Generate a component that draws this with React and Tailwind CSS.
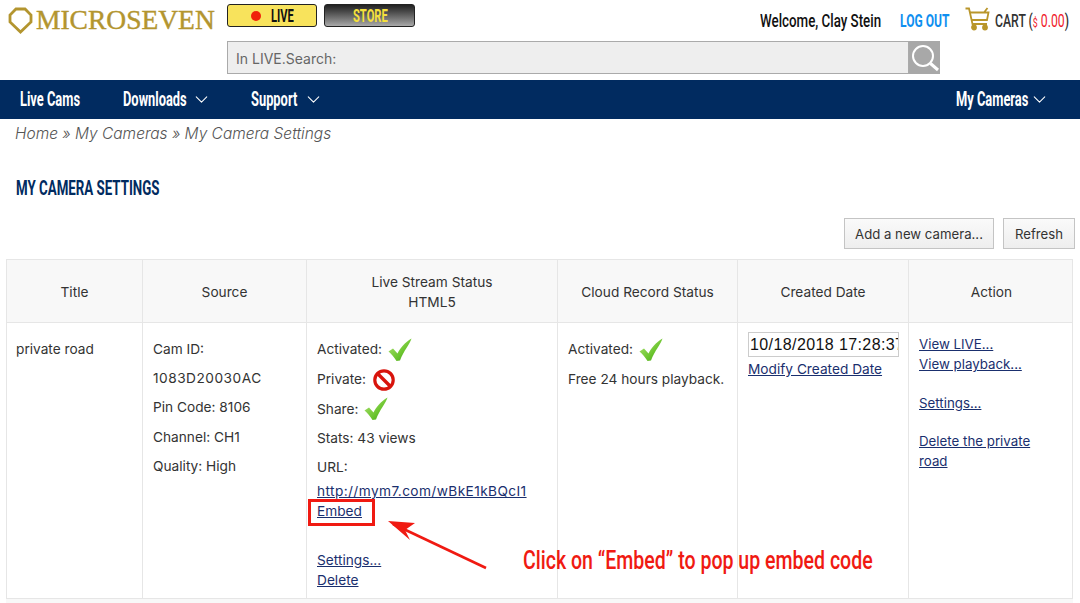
import React from "react";
import { ChevronDown } from "lucide-react";

const Check = () => (
  <svg width="24" height="25" viewBox="0 0 24 25" className="inline-block align-middle ml-[2px]">
    <defs>
      <linearGradient id="chk" x1="0" y1="0" x2="1" y2="1">
        <stop offset="0" stopColor="#b4e57a" />
        <stop offset="0.6" stopColor="#6cc52f" />
        <stop offset="1" stopColor="#3f9a14" />
      </linearGradient>
    </defs>
    <path d="M0.5 13.5 L5 10.5 L9.5 15.5 C12 10 17 4.5 23.5 0.5 C22.5 5 15.5 13 12 22.5 L8.5 23 C6 19 3.5 16 0.5 13.5 Z" fill="url(#chk)" />
  </svg>
);

const NoSign = () => (
  <svg width="24" height="24" viewBox="0 0 24 24" className="inline-block align-middle ml-[2px]">
    <circle cx="12" cy="12" r="9.2" fill="#fff" stroke="#d8140c" strokeWidth="3.2" />
    <path d="M5.5 5.5 L18.5 18.5" stroke="#d8140c" strokeWidth="3.4" />
  </svg>
);

const Cart = () => (
  <svg width="25" height="24" viewBox="0 0 25 24" fill="none" stroke="#b9962b" strokeWidth="1.8">
    <path d="M0.5 1.5 H4 L7.5 17 H22" />
    <path d="M5 5.5 L23.5 5.5 L22 13 H6.5 M19 5.5 L22.5 1" />
    <circle cx="9" cy="20.5" r="2" fill="#b9962b" />
    <circle cx="20" cy="20.5" r="2" fill="#b9962b" />
  </svg>
);

const condensed = "font-['Roboto',sans-serif]";

// no condensed family is installed, so squeeze Roboto to the width in the picture
const Cond = ({ w, x, children, className }) => (
  <span className={`inline-block shrink-0 ${w} ${className || ""}`}>
    <span className={`inline-block origin-left whitespace-nowrap ${x} ${condensed}`}>{children}</span>
  </span>
);

const Chevron = ({ className }) => (
  <ChevronDown size={21} strokeWidth={1.2} className={`text-white ${className || ""}`} />
);

const Link = ({ children, className }) => <a className={`text-[#1a2f6e] underline ${className || ""}`}>{children}</a>;

const Header = () => (
  <header className="h-[80px]">
    <div className="flex items-start pl-[8px] pr-[12px]">
      <div className="flex items-center w-[219px] h-[40px]">
        <svg width="25" height="27" viewBox="0 0 25 27" fill="none" stroke="#b3952f" strokeWidth="2.8">
          <path d="M8 2 H17 L23 8 V15 L12.5 25 L2 15 V8 Z" />
        </svg>
        <span className="font-['Liberation_Serif',serif] text-[27.5px] leading-none text-[#b3952f] ml-[3px] [-webkit-text-stroke:0.4px_#b3952f]">
          MICROSEVEN
        </span>
      </div>
      <a className="mt-[4px] w-[90px] h-[23px] flex items-center pl-[23px] rounded-[3px] border border-[#222] bg-[#f8e35c] text-[#111] text-[18px] font-bold">
        <span className="w-[10px] h-[10px] rounded-full bg-[#f0210a] mr-[10px]" />
        <Cond w="w-[24px]" x="scale-x-[0.62]">LIVE</Cond>
      </a>
      <a className="mt-[4px] ml-[7px] w-[91px] h-[23px] flex items-center pl-[28px] rounded-[3px] border border-[#222] bg-gradient-to-b from-[#222] to-[#aaa] text-[#f6e03c] text-[18px] font-bold">
        <Cond w="w-[36px]" x="scale-x-[0.62]">STORE</Cond>
      </a>
      <div className="ml-auto flex items-center h-[40px] text-[18px]">
        <Cond w="w-[120px]" x="scale-x-[0.74] font-medium" className="text-[#111]">Welcome, Clay Stein</Cond>
        <Cond w="w-[49px]" x="scale-x-[0.67] font-bold" className="ml-[20px] text-[#0f8ff0]">LOG OUT</Cond>
        <span className="ml-[16px] -mt-[3px]"><Cart /></span>
        <Cond w="w-[73px]" x="scale-x-[0.68] font-medium" className="ml-[5px] text-[#333]">
          CART (<span className="text-[#f0202a] font-normal"><span className="text-[13px]">$</span> 0.00</span>)
        </Cond>
      </div>
    </div>
    <div className="flex ml-[227px] w-[713px] h-[33px] mt-px">
      <div className="flex-1 flex items-center bg-[#eeeeee] border border-[#aaa] pl-[8px] pt-px text-[14px] text-[#666] font-['Inter',sans-serif]">
        In LIVE.Search:
      </div>
      <div className="w-[31px] bg-[#a8a8a8] flex items-center justify-center">
        <svg width="30" height="30" viewBox="0 0 30 30" fill="none" stroke="#fff" strokeWidth="2">
          <circle cx="13" cy="13" r="10" />
          <path d="M20.5 20.5 L28 27" strokeWidth="3" />
        </svg>
      </div>
    </div>
  </header>
);

const Nav = () => (
  <nav className="h-[39px] bg-[#012b60] flex items-center pl-[20px] pr-[30px] text-white text-[19.5px] font-bold">
    <Cond w="w-[59px]" x="scale-x-[0.66]">Live Cams</Cond>
    <Cond w="w-[65px]" x="scale-x-[0.66]" className="ml-[44px]">Downloads</Cond>
    <Chevron className="ml-[3px]" />
    <Cond w="w-[49px]" x="scale-x-[0.66]" className="ml-[39px]">Support</Cond>
    <Chevron className="ml-[3px]" />
    <Cond w="w-[73px]" x="scale-x-[0.66]" className="ml-auto">My Cameras</Cond>
    <Chevron />
  </nav>
);

const cols = "grid grid-cols-[136px_164px_251px_180px_171px_165px]";
const cell = "border-r border-[#e6e6e6] last:border-r-0";
const head = `${cell} flex items-center justify-center pt-px`;

const Table = () => (
  <div className="mx-[6px] w-[1067px] border-l border-r border-t border-[#e6e6e6] text-[13.7px] text-[#333] font-['Inter',sans-serif]">
    <div className={`${cols} h-[63px] bg-[#f8f8f8] border-b border-[#e6e6e6] text-center leading-[20px]`}>
      <div className={head}>Title</div>
      <div className={head}>Source</div>
      <div className={head}>Live Stream Status<br />HTML5</div>
      <div className={head}>Cloud Record Status</div>
      <div className={head}>Created Date</div>
      <div className={head}>Action</div>
    </div>
    <div className={`${cols} h-[276px] border-b border-[#e6e6e6]`}>
      <div className={`${cell} pl-[9px] pt-[16px] leading-[20px]`}>private road</div>
      <div className={`${cell} pl-[10px] pt-[12px] leading-[29.2px]`}>
        <p>Cam ID:</p>
        <p className="tracking-[0.5px]">1083D20030AC</p>
        <p>Pin Code: 8106</p>
        <p>Channel: CH1</p>
        <p>Quality: High</p>
      </div>
      <div className={`${cell} pl-[10px] pt-[13px]`}>
        <p className="h-[30px] leading-[26px]">Activated: <Check /></p>
        <p className="h-[29.5px] leading-[26px]">Private: <NoSign /></p>
        <p className="h-[29.5px] leading-[26px]">Share: <Check /></p>
        <p className="h-[29px] leading-[26px]">Stats: 43 views</p>
        <p className="h-[27px] leading-[26px]">URL:</p>
        <p className="leading-[20px]"><Link className="tracking-[0.4px]">http://mym7.com/wBkE1kBQcI1</Link></p>
        <p className="leading-[20px]"><Link>Embed</Link></p>
        <p className="leading-[20px] mt-[29px]"><Link>Settings...</Link></p>
        <p className="leading-[20px]"><Link>Delete</Link></p>
      </div>
      <div className={`${cell} pl-[10px] pt-[13px]`}>
        <p className="h-[30px] leading-[26px]">Activated: <Check /></p>
        <p className="leading-[26px]">Free 24 hours playback.</p>
      </div>
      <div className={`${cell} pl-[10px] pt-[9px]`}>
        <input
          readOnly
          defaultValue="10/18/2018 17:28:37"
          className="block w-[151px] h-[25px] border border-[#ccc] pl-px text-[#111] text-[16px] tracking-[0.4px] font-['Liberation_Sans',sans-serif]"
        />
        <p className="leading-[24px]"><Link>Modify Created Date</Link></p>
      </div>
      <div className={`${cell} pl-[10px] pr-[30px] pt-[11px] leading-[20px] text-[13.3px]`}>
        <p><Link>View LIVE...</Link></p>
        <p><Link>View playback...</Link></p>
        <p className="mt-[19px]"><Link>Settings...</Link></p>
        <p className="mt-[18px]"><Link>Delete the private road</Link></p>
      </div>
    </div>
  </div>
);

// red annotation drawn over the table
const Callout = () => (
  <>
    <div className="absolute left-[308px] top-[499px] w-[67px] h-[27px] border-[3px] border-[#f01a12]" />
    <svg className="absolute left-[385px] top-[518px]" width="105" height="55" viewBox="0 0 105 55" fill="none">
      <path d="M101 50 L8 6" stroke="#f01a12" strokeWidth="2.6" />
      <path d="M3 3 L30 5 L20 12 L25 22 Z" fill="#f01a12" />
    </svg>
    <Cond w="w-[350px]" x="scale-x-[0.782] font-medium" className="absolute left-[523px] top-[544px] text-[25px] leading-[30px] text-[#f01a12]">
      Click on “Embed” to pop up embed code
    </Cond>
  </>
);

export default function App() {
  return (
    <div className="relative w-[1080px] h-[603px] overflow-hidden bg-white">
      <Header />
      <Nav />
      <div className="pl-[15px] pt-[4px] text-[15.5px] leading-[22px] italic font-light text-[#555] font-['Inter',sans-serif]">
        Home » My Cameras » My Camera Settings
      </div>
      <h1 className="pl-[16px] mt-[31px] h-[24px] text-[20px] leading-[24px] font-bold text-[#012b60]">
        <Cond w="w-[143px]" x="scale-x-[0.665]">MY CAMERA SETTINGS</Cond>
      </h1>
      <div className="flex justify-end gap-[9px] pr-[5px] mt-[18px] mb-[10px] text-[13.2px] text-[#333] font-['Inter',sans-serif]">
        <button className="w-[150px] h-[31px] border border-[#c4c4c4] pt-[3px] bg-gradient-to-b from-[#fafafa] to-[#eeeeee]">Add a new camera...</button>
        <button className="w-[72px] h-[31px] border border-[#c4c4c4] pt-[3px] bg-gradient-to-b from-[#fafafa] to-[#eeeeee]">Refresh</button>
      </div>
      <Table />
      <div className="mx-[6px] w-[1067px] h-[10px] bg-[#f8f8f8]" />
      <Callout />
    </div>
  );
}
